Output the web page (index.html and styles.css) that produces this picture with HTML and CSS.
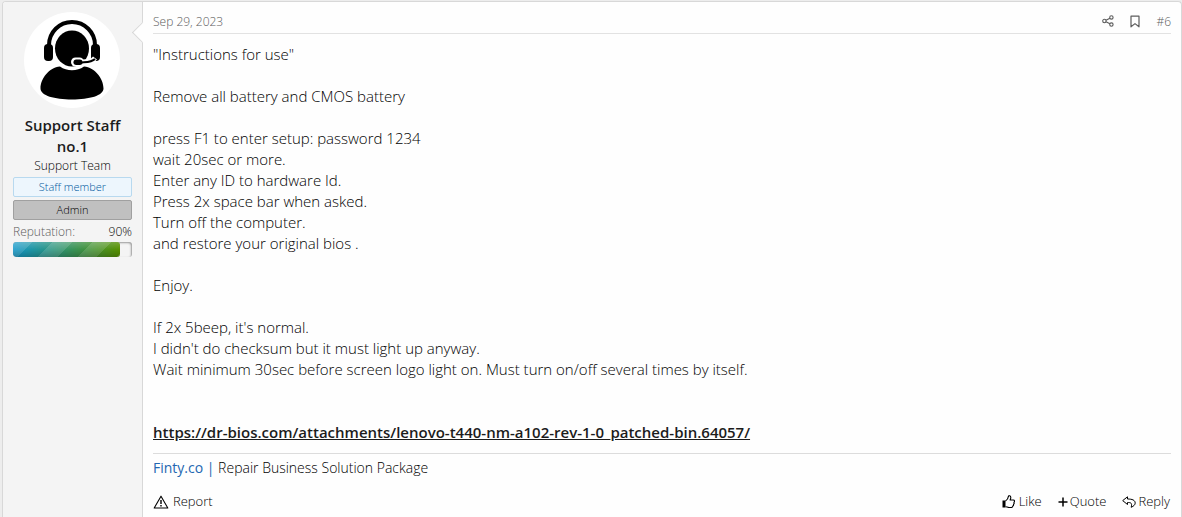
FILE: index.html
```html
<!DOCTYPE html>
<html lang="en">
<head>
<meta charset="utf-8">
<title>Forum post #6</title>
<meta name="viewport" content="width=device-width, initial-scale=1">
<link rel="stylesheet" href="styles.css">
</head>
<body>
<article class="post">
  <aside class="user">
    <svg class="avatar" viewBox="0 0 96 96" role="img" aria-label="Support Staff avatar">
      <circle cx="48" cy="48" r="48" fill="#fff"/>
      <path d="M25 36V33a23 23 0 0 1 46 0v3" fill="none" stroke="#000" stroke-width="4"/>
      <rect x="20" y="32" width="9" height="17" rx="4"/>
      <rect x="67" y="32" width="9" height="17" rx="4"/>
      <ellipse cx="48" cy="36.500" rx="17" ry="18"/>
      <path d="M71 46c-3 4-7 4-13 4" fill="none" stroke="#fff" stroke-width="5"/>
      <rect x="47" y="45.500" width="13" height="9" rx="4.500" fill="#fff"/>
      <path d="M71 47c-3 3-7 3-13 3.500" fill="none" stroke="#000" stroke-width="2"/>
      <rect x="49.500" y="47.500" width="9" height="5.500" rx="2.700"/>
      <path d="M36 54.500c7 5 17 5 24 0 11 1 19.500 12 19.500 22 0 7-14 11-31.500 11s-31.500-4-31.500-11c0-10 8.500-21 19.500-22z"/>
    </svg>
    <h4 class="user-name">Support Staff no.1</h4>
    <div class="user-title">Support Team</div>
    <div class="banner banner-staff">Staff member</div>
    <div class="banner banner-admin">Admin</div>
    <div class="reputation"><span id="rep-label">Reputation:</span><span class="rep-value">90%</span></div>
    <div class="meter" role="progressbar" aria-labelledby="rep-label" aria-valuenow="90" aria-valuemin="0" aria-valuemax="100"><div class="meter-fill" style="width: 90%"></div></div>
  </aside>
  <section class="main">
    <header class="post-head">
      <a class="date" href="#"><time datetime="2023-09-29">Sep 29, 2023</time></a>
      <div class="head-links">
        <a href="#" aria-label="Share"><svg class="icon-share" viewBox="0 0 12 12"><g fill="none" stroke="currentColor" stroke-width="1.1"><circle cx="2.4" cy="6" r="1.7"/><circle cx="9.4" cy="2.4" r="1.7"/><circle cx="9.4" cy="9.6" r="1.7"/><path d="M4 5.2l3.900-2M4 6.800l3.900 2"/></g></svg></a>
        <a href="#" aria-label="Bookmark"><svg class="icon-bookmark" viewBox="0 0 10 13"><path d="M1 1.200h8v10.600L5 8.600l-4 3.200z" fill="none" stroke="currentColor" stroke-width="1.200" stroke-linejoin="round"/></svg></a>
        <a href="#">#6</a>
      </div>
    </header>
    <div class="body">
      <p>"Instructions for use"</p>
      <p>Remove all battery and CMOS battery</p>
      <p>press F1 to enter setup: password 1234<br>wait 20sec or more.<br>Enter any ID to hardware Id.<br>Press 2x space bar when asked.<br>Turn off the computer.<br>and restore your original bios .</p>
      <p>Enjoy.</p>
      <p>If 2x 5beep, it's normal.<br>I didn't do checksum but it must light up anyway.<br>Wait minimum 30sec before screen logo light on. Must turn on/off several times by itself.</p>
      <p class="download"><a href="#">https://dr-bios.com/attachments/lenovo-t440-nm-a102-rev-1-0_patched-bin.64057/</a></p>
    </div>
    <div class="signature"><a href="#">Finty.co |</a> Repair Business Solution Package</div>
    <footer class="actions">
      <button class="action report" type="button"><svg class="icon-report" viewBox="0 0 16 14"><path d="M8 1.200L14.800 13H1.200z" fill="none" stroke="currentColor" stroke-width="1.100" stroke-linejoin="round"/><path d="M8 5v4M8 10v1.400" stroke="currentColor" stroke-width="1.400"/></svg>Report</button>
      <div class="action-group">
        <button class="action like" type="button"><svg class="icon-like" viewBox="0 0 13 13"><path d="M.5 5.500h3v7h-3z" fill="currentColor"/><path d="M3.500 6c2-1 2.600-2.200 3-4.800.1-.8 2.300-.6 2.300 1.300 0 1-.4 1.700-.7 2.500h3.300c1.500 0 1.300 1.900.5 2.300.5.9.2 1.600-.4 2 .2.900-.1 1.500-.7 1.800 0 1-.6 1.400-1.600 1.400H7c-1.500 0-2.200-.8-3.500-.8" fill="none" stroke="currentColor" stroke-width="1.100" stroke-linejoin="round"/></svg>Like</button>
        <button class="action quote" type="button"><svg class="icon-plus" viewBox="0 0 10 10"><path d="M5 .5v9M.5 5h9" stroke="currentColor" stroke-width="1.500"/></svg>Quote</button>
        <button class="action reply" type="button"><svg class="icon-reply" viewBox="0 0 14 12"><path d="M5.500 .8L.7 4.600l4.800 3.900V6.500c3.500 0 4.800.4 3.700 4.800 2.600-1.200 4-2.700 4-4.200 0-3-3-4.100-7.700-4.100z" fill="none" stroke="currentColor" stroke-width="1" stroke-linejoin="round"/></svg>Reply</button>
      </div>
    </footer>
  </section>
</article>
</body>
</html>
```
FILE: styles.css
```css
* { box-sizing: border-box; }
body {
  margin: 0;
  padding: 1px 0 0 2px;
  background: #ededed;
  color: #000;
  font: 300 15px/21px "Open Sans", "Noto Sans", sans-serif;
}
a { color: inherit; text-decoration: none; }
svg { display: block; flex: none; }
.post {
  display: flex;
  min-height: calc(100vh - 1px);
  border: 1px solid #d8d8d8;
  border-bottom: 0;
  border-radius: 4px 4px 0 0;
  background: #fefefe;
}
.user {
  position: relative;
  flex: 0 0 140px;
  padding: 10px;
  border-right: 1px solid #d8d8d8;
  border-radius: 3px 0 0 0;
  background: #f4f4f4;
  font-size: 12px;
}
.user::after {
  content: "";
  position: absolute;
  top: 23px;
  right: -8px;
  width: 14px;
  height: 14px;
  border: solid #d8d8d8;
  border-width: 0 0 1px 1px;
  background: #fefefe;
  transform: rotate(45deg);
}
.avatar { width: 96px; height: 96px; margin: 0 11px; }
.user-name { margin: 7px 0 0; color: #1c1c1c; font-size: 15px; font-weight: 600; text-align: center; }
.user-title { line-height: 18px; text-align: center; }
.banner {
  height: 20px;
  margin-top: 3px;
  border: 1px solid;
  border-radius: 2px;
  font-size: 11px;
  line-height: 18px;
  text-align: center;
}
.user-title + .banner { margin-top: 2px; }
.banner-staff { border-color: #b8d9ef; background: #edf6fd; color: #0059a0; }
.banner-admin { border-color: #a0a0a0; background: #c0c0c0; }
.reputation { display: flex; justify-content: space-between; margin-top: 3px; line-height: 18px; color: #5c5c5c; }
.rep-value { color: #000; }
.meter { height: 15px; margin-top: 1px; overflow: hidden; border-radius: 3px; background: #f4f4f4; box-shadow: inset -1px 1px 2px #999; }
.meter-fill {
  height: 100%;
  border-radius: 3px;
  background: linear-gradient(#fff3, #0000 50%, #0003), repeating-linear-gradient(135deg, #fff2 0 14px, #0000 14px 28px), linear-gradient(90deg, #1297c9, #579000);
}
.main { flex: 1; min-width: 0; padding: 9px 10px 0 10px; }
.post-head {
  display: flex;
  justify-content: space-between;
  align-items: center;
  height: 23px;
  padding-bottom: 2px;
  border-bottom: 1px solid #e2e2e2;
  color: #5c5c5c;
  font-size: 12px;
}
.head-links { display: flex; align-items: center; gap: 16px; }
.icon-share { width: 12px; height: 12px; }
.icon-bookmark { width: 10px; height: 13px; }
.body { padding-top: 10px; }
.body p { margin: 0 0 21px; }
.body .download { margin: 42px 0 0; color: #1c1c1c; font-weight: 600; }
.download a { text-decoration: underline; }
.signature { margin-top: 10px; padding-top: 3px; border-top: 1px solid #dcdcdc; font-size: 14px; }
.signature a { color: #2366b1; font-weight: 400; }
.actions { display: flex; justify-content: space-between; margin-top: 13px; }
.action-group { display: flex; gap: 16px; padding-right: 1px; }
.action {
  display: flex;
  align-items: center;
  gap: 4px;
  padding: 0;
  border: 0;
  background: none;
  color: #000;
  font: inherit;
  font-size: 13px;
  cursor: pointer;
}
.quote, .reply { gap: 2px; }
.icon-report { width: 16px; height: 14px; }
.icon-like { width: 13px; height: 13px; }
.icon-plus { width: 10px; height: 10px; }
.icon-reply { width: 14px; height: 12px; }
```
